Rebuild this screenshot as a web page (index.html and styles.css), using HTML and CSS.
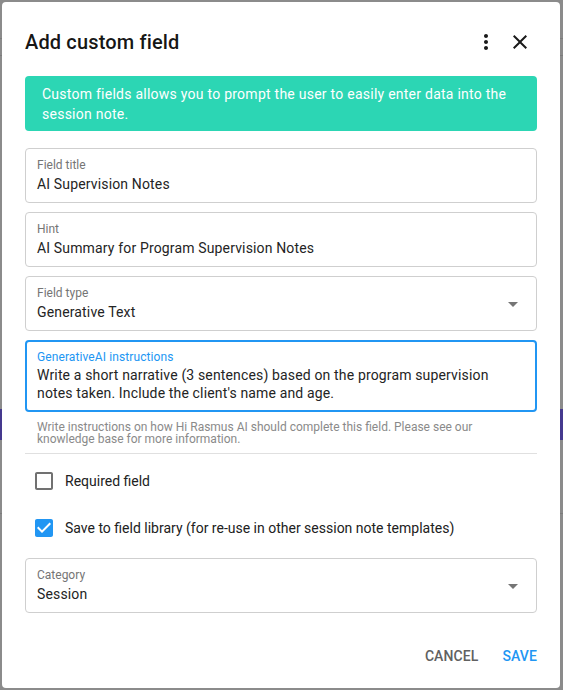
FILE: index.html
```html
<!DOCTYPE html>
<html>
<head>
<meta charset="utf-8">
<link rel="stylesheet" href="styles.css">
</head>
<body>
<div class="backdrop">
  <div class="bg-line bg-line-1"></div>
  <div class="bg-line bg-line-2"></div>
  <div class="bg-band"></div>
  <div class="bg-line bg-line-3"></div>
</div>
<div class="dialog">
  <div class="header">
    <h1 class="title">Add custom field</h1>
    <div class="header-actions">
      <svg class="icon" viewBox="0 0 24 24"><path d="M12 8c1.1 0 2-.9 2-2s-.9-2-2-2-2 .9-2 2 .9 2 2 2zm0 2c-1.1 0-2 .9-2 2s.9 2 2 2 2-.9 2-2-.9-2-2-2zm0 6c-1.1 0-2 .9-2 2s.9 2 2 2 2-.9 2-2-.9-2-2-2z"/></svg>
      <svg class="icon" viewBox="0 0 24 24"><path d="M19 6.41 17.59 5 12 10.59 6.41 5 5 6.41 10.59 12 5 17.59 6.41 19 12 13.41 17.59 19 19 17.59 13.41 12z"/></svg>
    </div>
  </div>
  <div class="banner">Custom fields allows you to prompt the user to easily enter data into the session note.</div>

  <div class="field">
    <div class="field-label">Field title</div>
    <div class="field-value">AI Supervision Notes</div>
  </div>
  <div class="field">
    <div class="field-label">Hint</div>
    <div class="field-value">AI Summary for Program Supervision Notes</div>
  </div>
  <div class="field field-select">
    <div class="field-body">
      <div class="field-label">Field type</div>
      <div class="field-value">Generative Text</div>
    </div>
    <svg class="arrow" viewBox="0 0 24 24"><path d="M7 10l5 5 5-5z"/></svg>
  </div>
  <div class="field field-focused">
    <div class="field-label">GenerativeAI instructions</div>
    <div class="field-value field-multiline">Write a short narrative (3 sentences) based on the program supervision notes taken. Include the client's name and age.</div>
  </div>
  <div class="helper">Write instructions on how Hi Rasmus AI should complete this field. Please see our knowledge base for more information.</div>
  <div class="divider"></div>

  <div class="checks">
    <label class="check-row">
      <svg class="check-icon check-off" viewBox="0 0 24 24"><path d="M19 5v14H5V5h14m0-2H5c-1.1 0-2 .9-2 2v14c0 1.1.9 2 2 2h14c1.1 0 2-.9 2-2V5c0-1.1-.9-2-2-2z"/></svg>
      <span class="check-label">Required field</span>
    </label>
    <label class="check-row">
      <svg class="check-icon check-on" viewBox="0 0 24 24"><path d="M19 3H5c-1.11 0-2 .9-2 2v14c0 1.1.89 2 2 2h14c1.11 0 2-.9 2-2V5c0-1.1-.89-2-2-2zm-9 14l-5-5 1.41-1.41L10 14.17l7.59-7.59L19 8l-9 9z"/></svg>
      <span class="check-label">Save to field library (for re-use in other session note templates)</span>
    </label>
  </div>

  <div class="field field-select">
    <div class="field-body">
      <div class="field-label">Category</div>
      <div class="field-value">Session</div>
    </div>
    <svg class="arrow" viewBox="0 0 24 24"><path d="M7 10l5 5 5-5z"/></svg>
  </div>

  <div class="actions">
    <button class="btn btn-cancel">Cancel</button>
    <button class="btn btn-save">Save</button>
  </div>
</div>
</body>
</html>
```

FILE: styles.css
```css
* { box-sizing: border-box; }

html, body {
  margin: 0;
  padding: 0;
}

body {
  width: 563px;
  height: 690px;
  overflow: hidden;
  position: relative;
  background: #8b8b8b;
  font-family: Roboto, "Liberation Sans", Arial, sans-serif;
}

.backdrop {
  height: 690px;
  display: flex;
  flex-direction: column;
}

.bg-line {
  height: 1px;
  background: #7c7c7c;
}
.bg-line-1 { margin-top: 38px; }
.bg-line-2 { margin-top: 16px; }
.bg-band {
  margin-top: 353px;
  height: 31px;
  background: #45398e;
}
.bg-line-3 { margin-top: 73px; }

.dialog {
  position: absolute;
  left: 2px;
  top: 2px;
  width: 558px;
  height: 686px;
  background: #fff;
  border-radius: 4px;
  padding: 0 23px;
  display: flex;
  flex-direction: column;
}

.header {
  display: flex;
  align-items: center;
  justify-content: space-between;
  margin-top: 24px;
  height: 32px;
}

.title {
  margin: 0;
  font-size: 20px;
  font-weight: 500;
  line-height: 32px;
  color: rgba(0, 0, 0, 0.92);
  letter-spacing: 0.15px;
}

.header-actions {
  display: flex;
  align-items: center;
  gap: 10px;
  margin-right: 5px;
}

.icon {
  width: 24px;
  height: 24px;
  fill: #1a1a1a;
}

.banner {
  margin-top: 18px;
  background: #2cd6b4;
  color: #fff;
  border-radius: 4px;
  padding: 8px 16px 7px 17px;
  font-size: 14px;
  line-height: 20px;
  letter-spacing: 0.25px;
}

.field {
  margin-top: 17px;
  border: 1px solid #cfcfcf;
  border-radius: 4px;
  padding: 8px 11px;
  height: 55px;
}
.field + .field { margin-top: 9px; }

.field-label {
  font-size: 12px;
  line-height: 16px;
  color: #757575;
  margin-bottom: 1px;
}

.field-value {
  font-size: 14px;
  line-height: 20px;
  color: #242424;
  letter-spacing: 0.15px;
}

.field-select {
  display: flex;
  align-items: center;
  padding-right: 0;
}
.field-body { flex: 1; }

.arrow {
  width: 24px;
  height: 24px;
  fill: #757575;
  margin-right: 11px;
}

.field-focused {
  height: 72px;
  border: 2px solid #2196f3;
  padding: 7px 36px 7px 10px;
}
.field-focused .field-label {
  color: #2196f3;
  margin-bottom: 1px;
  letter-spacing: 0.1px;
}
.field-multiline {
  line-height: 18px;
  font-size: 14px;
}

.helper {
  margin-top: 9px;
  padding-left: 12px;
  padding-right: 40px;
  font-size: 12px;
  line-height: 12px;
  color: #8a8a8a;
}

.divider {
  margin-top: 8px;
  height: 1px;
  background: #e0e0e0;
}

.checks {
  display: flex;
  flex-direction: column;
  gap: 23px;
  margin-top: 15px;
  padding-left: 7px;
}

.check-row {
  display: flex;
  align-items: center;
  gap: 9px;
  height: 24px;
}

.check-icon {
  width: 24px;
  height: 24px;
}
.check-off { fill: #717171; }
.check-on { fill: #2196f3; }

.check-label {
  font-size: 14px;
  color: #212121;
}

.checks + .field { margin-top: 18px; }

.actions {
  display: flex;
  justify-content: flex-end;
  gap: 24px;
  margin-top: 25px;
}

.btn {
  border: 0;
  background: none;
  padding: 0;
  height: 36px;
  font-family: Roboto, "Liberation Sans", Arial, sans-serif;
  font-size: 14px;
  font-weight: 500;
  text-transform: uppercase;
  letter-spacing: 0.1px;
}
.btn-cancel { color: #616161; }
.btn-save { color: #2196f3; }
```
